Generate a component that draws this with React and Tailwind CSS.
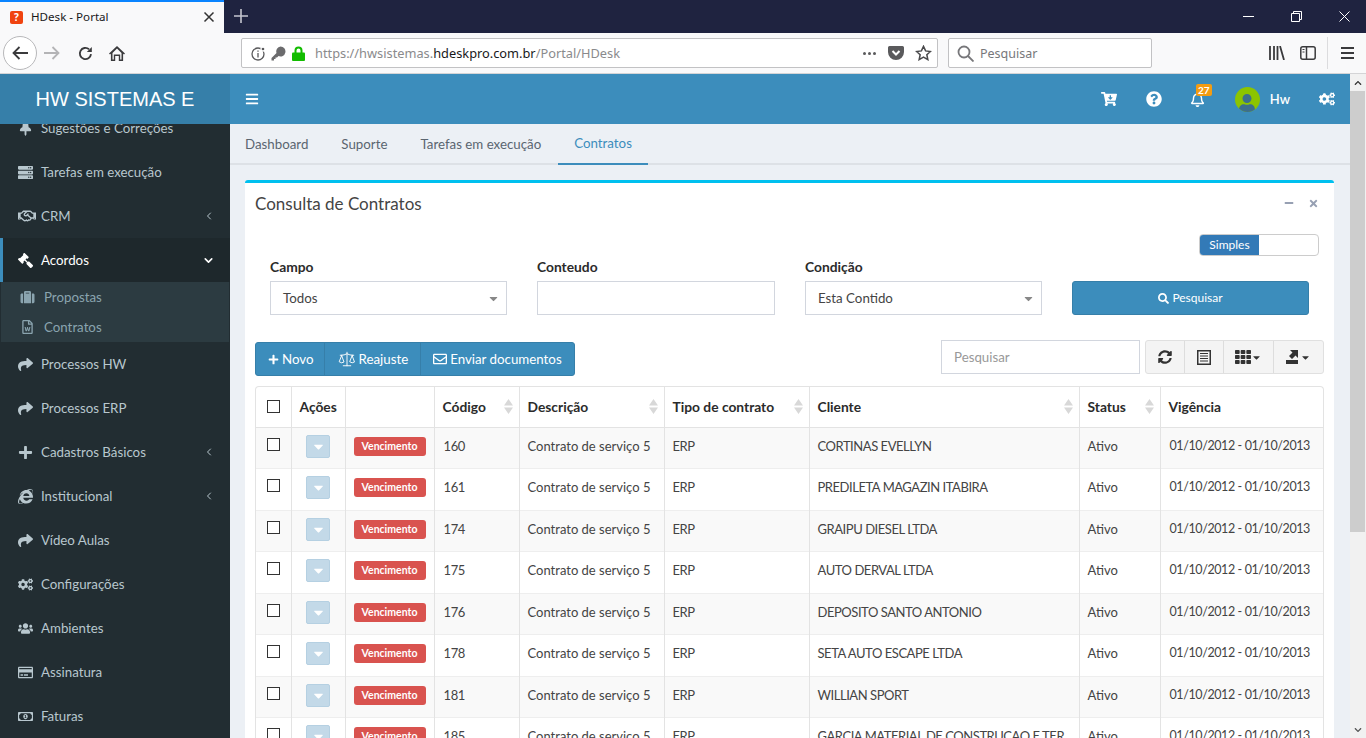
import React from 'react'
import {
  FaThumbtack, FaServer, FaRegHandshake, FaGavel, FaSuitcase, FaRegFileWord, FaShare, FaPlus,
  FaInternetExplorer, FaCogs, FaUsers, FaRegCreditCard, FaRegMoneyBillAlt, FaRegEnvelope,
  FaSyncAlt, FaTh, FaCartArrowDown, FaQuestionCircle, FaRegBell, FaUser, FaSearch,
  FaChevronLeft, FaChevronDown, FaTimes, FaMinus, FaCaretDown, FaBars,
} from 'react-icons/fa'
import { ChevronLeft, ChevronDown, Scale } from 'lucide-react'

const menu = [
  { icon: FaThumbtack, label: 'Sugestões e Correções' },
  { icon: FaServer, label: 'Tarefas em execução' },
  { icon: FaRegHandshake, label: 'CRM', arrow: true, big: true },
  { icon: FaGavel, label: 'Acordos', open: true },
  { icon: FaShare, label: 'Processos HW' },
  { icon: FaShare, label: 'Processos ERP' },
  { icon: FaPlus, label: 'Cadastros Básicos', arrow: true },
  { icon: FaInternetExplorer, label: 'Institucional', arrow: true },
  { icon: FaShare, label: 'Vídeo Aulas' },
  { icon: FaCogs, label: 'Configurações' },
  { icon: FaUsers, label: 'Ambientes' },
  { icon: FaRegCreditCard, label: 'Assinatura' },
  { icon: FaRegMoneyBillAlt, label: 'Faturas' },
]

const rows = [
  ['160', 'CORTINAS EVELLYN'],
  ['161', 'PREDILETA MAGAZIN ITABIRA'],
  ['174', 'GRAIPU DIESEL LTDA'],
  ['175', 'AUTO DERVAL LTDA'],
  ['176', 'DEPOSITO SANTO ANTONIO'],
  ['178', 'SETA AUTO ESCAPE LTDA'],
  ['181', 'WILLIAN SPORT'],
  ['185', 'GARCIA MATERIAL DE CONSTRUCAO E TER'],
]

function BrowserBar() {
  return (
    <div className="h-[74px] shrink-0 bg-[#f9f9fa] font-['Noto_Sans',sans-serif]">
      <div className="flex h-[33px] bg-[#1f2340] text-white">
        <div className="flex h-[33px] w-[224px] items-center border-t-2 border-[#0a84ff] bg-[#f9f9fa] pb-[1px] pl-[10px] pr-[9px] text-[11.6px] text-[#18181a]">
          <span className="flex h-[13px] w-[13px] items-center justify-center rounded-[2px] bg-[#f0430f] text-[10px] font-bold text-white">?</span>
          <span className="ml-[8px]">HDesk - Portal</span>
          <svg className="ml-auto" width="12" height="12" viewBox="0 0 12 12" stroke="#333" strokeWidth="1.5"><path d="M1.5 1.5l9 9M10.5 1.5l-9 9" /></svg>
        </div>
        <svg className="ml-[10px] mt-[9px]" width="14" height="14" viewBox="0 0 14 14" stroke="#c5c6cf" strokeWidth="1.6"><path d="M7 0v14M0 7h14" /></svg>
        <div className="ml-auto flex items-center">
          <svg className="mr-[37px]" width="11" height="11" viewBox="0 0 11 11" stroke="#fff"><path d="M0 5.5h11" /></svg>
          <svg className="mr-[37px]" width="11" height="11" viewBox="0 0 11 11" stroke="#fff" fill="none"><path d="M.5 2.5h8v8h-8zM2.500 2.500v-2h8v8h-2" /></svg>
          <svg className="mr-[16px]" width="11" height="11" viewBox="0 0 11 11" stroke="#fff"><path d="M.5.5l10 10M10.500.5l-10 10" /></svg>
        </div>
      </div>
      <div className="flex h-[41px] items-center border-b border-[#d4d4d6] pl-[3px]">
        <div className="flex h-[34px] w-[34px] items-center justify-center rounded-full border border-[#b8b8ba] bg-white">
          <svg width="16" height="14" viewBox="0 0 16 14" fill="none" stroke="#3a3a3c" strokeWidth="1.8"><path d="M16 7H2M7.5 1L1.5 7l6 6" /></svg>
        </div>
        <svg className="ml-[7px]" width="16" height="14" viewBox="0 0 16 14" fill="none" stroke="#b4b4b6" strokeWidth="1.8"><path d="M0 7h14M8.5 1l6 6-6 6" /></svg>
        <svg className="ml-[18px]" width="15" height="15" viewBox="0 0 15 15" fill="none" stroke="#3a3a3c" strokeWidth="1.9"><path d="M13 8.2A5.6 5.6 0 1 1 11 3.2" /><path d="M13.8 1v5h-5z" fill="#3a3a3c" stroke="none" /></svg>
        <svg className="ml-[16px]" width="16" height="15" viewBox="0 0 16 15" fill="#3a3a3c"><path d="M8 0l8 7.4-1 1.1-.9-.8V15H9.800V10H6.200v5H1.900V7.700l-.9.800-1-1.100z" /><path d="M3.500 7v6.500h1.300V8.500h6.400v5h1.300V7L8 2.500z" fill="#f9f9fa" /></svg>
        <div className="ml-[116px] flex h-[30px] w-[697px] items-center rounded-[2px] border border-[#c2c2c4] bg-white pl-[9px] pr-[5px] text-[12.8px]">
          <svg width="15" height="15" viewBox="0 0 15 15" fill="none" stroke="#5a5a5c" strokeWidth="1.300"><circle cx="7" cy="8" r="6" /><path d="M7 7v4.500M7 4.500v1.300" /><circle cx="12" cy="3" r="2" fill="#5a5a5c" stroke="#fff" /></svg>
          <svg className="ml-[5px]" width="15" height="15" viewBox="0 0 15 15" fill="#6b6b6d"><path d="M9.500 0.500a5 5 0 1 1-2 9.600L6 11.500H4.500V13H3v1.500H.5V12l5-5a5 5 0 0 1 4-6.500z" /></svg>
          <svg className="ml-[6px]" width="13" height="15" viewBox="0 0 13 15"><path d="M3.500 7V4.500a3 3 0 0 1 6 0V7" fill="none" stroke="#12bc00" strokeWidth="2" /><rect y="6.500" width="13" height="8.500" rx="1" fill="#12bc00" /></svg>
          <span className="ml-[10px] pt-[2px] text-[#8a8a8c]">https://hwsistemas.<span className="text-[#18181a]">hdeskpro.com.br</span>/Portal/HDesk</span>
          <span className="ml-auto flex gap-[2px]"><i className="h-[3px] w-[3px] rounded-full bg-[#5a5a5c]" /><i className="h-[3px] w-[3px] rounded-full bg-[#5a5a5c]" /><i className="h-[3px] w-[3px] rounded-full bg-[#5a5a5c]" /></span>
          <svg className="ml-[12px]" width="16" height="15" viewBox="0 0 16 15"><path d="M1.500 0h13A1.500 1.500 0 0 1 16 1.500V6A8 8 0 0 1 0 6V1.500A1.500 1.500 0 0 1 1.500 0z" fill="#5a5a5c" /><path d="M4.500 5L8 8.500 11.500 5" fill="none" stroke="#fff" strokeWidth="2" /></svg>
          <svg className="ml-[11px]" width="17" height="16" viewBox="0 0 24 23" fill="none" stroke="#4a4a4c" strokeWidth="2.200"><path d="M12 2l3 6.500 7 .8-5.200 4.700 1.400 7L12 17.500 5.800 21l1.400-7L2 9.300l7-.8z" /></svg>
        </div>
        <div className="ml-[10px] flex h-[30px] w-[204px] items-center rounded-[2px] border border-[#c2c2c4] bg-white pl-[8px] text-[12.5px] text-[#77777a]">
          <svg width="17" height="17" viewBox="0 0 17 17" fill="none" stroke="#77777a" strokeWidth="1.800"><circle cx="7" cy="7" r="5.500" /><path d="M11 11l5.500 5.500" /></svg>
          <span className="ml-[6px] pt-[2px]">Pesquisar</span>
        </div>
        <svg className="ml-[117px]" width="16" height="14" viewBox="0 0 16 14" stroke="#3a3a3c" strokeWidth="1.800"><path d="M1 0v14M5 0v14M8.500 0v14M11 0l4 14" /></svg>
        <svg className="ml-[15px]" width="16" height="14" viewBox="0 0 16 14" fill="none" stroke="#3a3a3c" strokeWidth="1.500"><rect x=".8" y=".8" width="14.400" height="12.400" rx="2" /><path d="M6.500 1v12" /><path d="M2.500 3.500h2M2.500 6h2" strokeWidth="1" /></svg>
        <i className="ml-[11px] h-[32px] w-px bg-[#dcdcde]" />
        <svg className="ml-[13px]" width="13" height="12" viewBox="0 0 13 12" stroke="#3a3a3c" strokeWidth="1.800"><path d="M0 1h13M0 6h13M0 11h13" /></svg>
      </div>
    </div>
  )
}

function SideItem({ item }) {
  const Icon = item.icon
  return (
    <div className={`flex h-[44px] shrink-0 items-center pr-[15px] text-[13.3px] ${item.open ? 'border-l-[3px] border-[#3c8dbc] bg-[#1e282c] pl-[15px] text-white' : 'pl-[18px] text-[#b8c7ce]'}`}>
      <span className="flex w-[23px] shrink-0 items-center">
        <Icon className={`${item.big ? 'text-[18px]' : 'text-[15px]'} ${item.open ? '-scale-x-100' : ''}`} />
      </span>
      <span className="pt-[2px]">{item.label}</span>
      {item.arrow && <ChevronLeft className="ml-auto" size={12} strokeWidth={2} />}
      {item.open && <ChevronDown className="ml-auto" size={13} strokeWidth={3} />}
    </div>
  )
}

function Sidebar() {
  return (
    <aside className="w-[230px] shrink-0 overflow-hidden bg-[#222d32]">
      <div className="-mt-[18px] flex flex-col">
        {menu.map((m) => (
          <React.Fragment key={m.label}>
            <SideItem item={m} />
            {m.open && (
              <div className="mx-px h-[60px] shrink-0 bg-[#2c3b41] text-[13.3px] text-[#8aa4af]">
                <div className="flex h-[30px] items-center pl-[19px]">
                  <FaSuitcase className="mr-[9px] w-[15px] text-[14px]" /><span className="pt-[2px]">Propostas</span>
                </div>
                <div className="flex h-[30px] items-center pl-[19px]">
                  <FaRegFileWord className="mr-[9px] w-[15px] text-[14px]" /><span className="pt-[2px]">Contratos</span>
                </div>
              </div>
            )}
          </React.Fragment>
        ))}
      </div>
    </aside>
  )
}

function Header() {
  return (
    <header className="flex h-[50px] shrink-0 text-white">
      <div className="flex w-[230px] items-center justify-center bg-[#367fa9] font-['Liberation_Sans',sans-serif] text-[20px]">HW SISTEMAS E</div>
      <div className="flex flex-1 items-center bg-[#3c8dbc]">
        <FaBars className="ml-[15px] text-[14px]" />
        <div className="ml-auto flex items-center">
          <FaCartArrowDown className="mr-[29px] text-[16px]" />
          <FaQuestionCircle className="mr-[28px] text-[16px]" />
          <span className="relative mr-[30px]">
            <FaRegBell className="text-[15px]" />
            <span className="absolute -top-[8px] left-[6px] h-[12px] w-[16px] rounded-[2px] bg-[#f39c12] text-center text-[10px] font-bold leading-[12px]">27</span>
          </span>
          <span className="flex h-[25px] w-[25px] items-end justify-center overflow-hidden rounded-full bg-[#8cc400]"><FaUser className="text-[18px] text-[#3c6e8c]" /></span>
          <span className="ml-[10px] mr-[29px] mt-[2px] text-[13px] font-semibold">Hw</span>
          <FaCogs className="mr-[15px] text-[16px]" />
        </div>
      </div>
    </header>
  )
}

function Tabs() {
  const tabs = ['Dashboard', 'Suporte', 'Tarefas em execução', 'Contratos']
  return (
    <div className="flex h-[41px] shrink-0 border-b-2 border-[#dde1e6] text-[13.3px] text-[#5a6570]">
      {tabs.map((t) => (
        <div key={t} className={`-mb-[2px] flex h-[41px] items-center px-[16.5px] first:-ml-[1.5px] ${t === 'Contratos' ? 'border-b-2 border-[#3c8dbc] text-[#3c8dbc]' : ''}`}>{t}</div>
      ))}
    </div>
  )
}

function FormField({ label, value, select, w }) {
  return (
    <div className={w}>
      <div className="mb-[5px] text-[13.8px] font-bold leading-[18px] text-[#2b2b2b]">{label}</div>
      <div className="flex h-[34px] items-center border border-[#d2d6de] pl-[12px] pr-[6px] text-[13.3px] text-[#444]">
        <span className="pt-[2px]">{value}</span>
        {select && <FaCaretDown className="ml-auto text-[13px] text-[#888]" />}
      </div>
    </div>
  )
}

function SortIcon() {
  return (
    <svg className="ml-auto -mr-[2px] -mt-[2px] shrink-0" width="9" height="15" viewBox="0 0 9 15" fill="#d8d8d8"><path d="M4.500 0L9 6.500H0zM0 8.500h9L4.500 15z" /></svg>
  )
}

function Th({ w, label, sort }) {
  return (
    <th className={`${w} h-[40px] border-r border-[#e3e3e3] px-[8px] text-left align-middle text-[13.8px] font-bold text-[#2b2b2b] last:border-r-0`}>
      <div className="flex items-center whitespace-nowrap pt-[2px]">{label}{sort && <SortIcon />}</div>
    </th>
  )
}

function ContractsTable() {
  return (
    <div className="h-[352px] overflow-hidden rounded-t-[4px] border border-b-0 border-[#e3e3e3]">
      <table className="w-full table-fixed border-collapse text-[13px] text-[#444]">
        <thead>
          <tr className="border-b border-[#e3e3e3]">
            <th className="h-[40px] w-[35px] border-r border-[#e3e3e3] align-middle">
              <div className="ml-[11px] h-[13px] w-[13px] border border-[#333] bg-white" />
            </th>
            <Th w="w-[54px]" label="Ações" />
            <Th w="w-[89px]" />
            <Th w="w-[85px]" label="Código" sort />
            <Th w="w-[145px]" label="Descrição" sort />
            <Th w="w-[145px]" label="Tipo de contrato" sort />
            <Th w="w-[270px]" label="Cliente" sort />
            <Th w="w-[81px]" label="Status" sort />
            <Th w="w-[163px]" label="Vigência" />
          </tr>
        </thead>
        <tbody>
          {rows.map(([code, client], i) => (
            <tr key={code} className={`h-[41.5px] border-b border-[#eeeeee] ${i % 2 === 0 ? 'bg-[#f9f9f9]' : 'bg-white'}`}>
              <td className="border-r border-[#e3e3e3] align-top">
                <div className="ml-[11px] mt-[10px] h-[13px] w-[13px] border border-[#333] bg-white" />
              </td>
              <td className="border-r border-[#e3e3e3] pb-[3px]">
                <div className="mx-auto flex h-[23px] w-[24px] items-center justify-center rounded-[2px] border border-[#b5d0e2] bg-[#c3d9e8]">
                  <FaCaretDown className="text-[15px] text-white" />
                </div>
              </td>
              <td className="border-r border-[#e3e3e3] pb-[3px] pl-[8px]">
                <span className="block h-[19px] w-[72px] rounded-[3px] bg-[#d9534f] text-center text-[10.500px] font-bold leading-[19px] text-white">Vencimento</span>
              </td>
              <td className="border-r border-[#e3e3e3] pb-[3px] pl-[9px] pr-[8px] tracking-[-0.4px]">{code}</td>
              <td className="whitespace-nowrap border-r border-[#e3e3e3] px-[8px] pb-[3px]">Contrato de serviço 5</td>
              <td className="border-r border-[#e3e3e3] px-[8px] pb-[3px] tracking-[-0.4px]">ERP</td>
              <td className="truncate border-r border-[#e3e3e3] px-[8px] pb-[3px] tracking-[-0.45px]">{client}</td>
              <td className="border-r border-[#e3e3e3] px-[8px] pb-[3px]">Ativo</td>
              <td className="whitespace-nowrap pb-[3px] pl-[9px] pr-[8px] text-[12.5px] tracking-[-0.4px]">01/10/2012 - 01/10/2013</td>
            </tr>
          ))}
        </tbody>
      </table>
    </div>
  )
}

function ListIcon() {
  return (
    <svg width="14" height="15" viewBox="0 0 14 15" fill="none" stroke="#333"><rect x=".75" y=".75" width="12.500" height="13.500" strokeWidth="1.500" /><path d="M3 3.500h8M3 6h8M3 8.500h8M3 11h8" /></svg>
  )
}

function ExportIcon() {
  return (
    <svg width="12" height="14" viewBox="0 0 12 14" fill="#333"><path d="M0 10h12v4H0zM4 0h8v8L9.500 5.500 6 9 3 6l3.500-3.500z" /></svg>
  )
}

function Card() {
  return (
    <section className="ml-[15px] mr-[16px] mt-[15px] rounded-t-[3px] border-t-[3px] border-[#00c0ef] bg-white px-[10px]">
      <div className="flex h-[40px] items-center text-[#444]">
        <h3 className="pt-[2px] text-[17px]">Consulta de Contratos</h3>
        <FaMinus className="ml-auto text-[10px] text-[#97a0b3]" />
        <FaTimes className="ml-[14px] mr-[5px] text-[11px] text-[#97a0b3]" />
      </div>
      <div className="mt-[11px] flex justify-end pr-[5px]">
        <div className="flex h-[22px] w-[120px] overflow-hidden rounded-[4px] border border-[#ccc] text-[12px] text-white">
          <span className="flex w-[59px] items-center justify-center bg-[#337ab7]">Simples</span>
        </div>
      </div>
      <div className="mt-[2px] flex items-end px-[15px]">
        <FormField label="Campo" value="Todos" select w="w-[237px]" />
        <FormField label="Conteudo" w="ml-[30px] w-[238px]" />
        <FormField label="Condição" value="Esta Contido" select w="ml-[30px] w-[237px]" />
        <button className="ml-[30px] flex h-[34px] w-[237px] items-center justify-center rounded-[3px] border border-[#367fa9] bg-[#3c8dbc] text-[12px] text-white">
          <FaSearch className="mr-[3px] text-[11px]" />Pesquisar
        </button>
      </div>
      <div className="mt-[27px] flex h-[34px] items-center">
        <div className="flex h-[34px] overflow-hidden rounded-[3px] border border-[#367fa9] bg-[#3c8dbc] text-[13.3px] text-white">
          <span className="flex items-center border-r border-[#367fa9] pl-[12px] pr-[10px] pt-[2px]"><FaPlus className="mr-[3px] -mt-[2px] text-[11px]" />Novo</span>
          <span className="flex items-center border-r border-[#367fa9] pl-[13px] pr-[12px] pt-[2px]"><Scale className="mr-[3px] -mt-[2px]" size={18} strokeWidth={1.25} />Reajuste</span>
          <span className="flex items-center pl-[12px] pr-[12px] pt-[2px]"><FaRegEnvelope className="mr-[3px] -mt-[2px] text-[14px]" />Enviar documentos</span>
        </div>
        <div className="mb-[4px] ml-auto flex h-[34px] w-[199px] items-center border border-[#d2d6de] pl-[12px] pt-[2px] text-[13.3px] text-[#999]">Pesquisar</div>
        <div className="mb-[4px] ml-[5px] flex h-[34px] w-[179px] rounded-[3px] border border-[#e0e0e0] bg-[#f4f4f4] text-[#333]">
          <span className="flex w-[39px] items-center justify-center border-r border-[#dddddd]"><FaSyncAlt className="text-[14px]" /></span>
          <span className="flex w-[39px] items-center justify-center border-r border-[#dddddd]"><ListIcon /></span>
          <span className="flex w-[50px] items-center justify-center border-r border-[#dddddd]"><FaTh className="text-[16px]" /><FaCaretDown className="text-[11px]" /></span>
          <span className="flex flex-1 items-center justify-center"><ExportIcon /><FaCaretDown className="ml-[2px] text-[11px]" /></span>
        </div>
      </div>
      <div className="mt-[10px]"><ContractsTable /></div>
    </section>
  )
}

export default function App() {
  return (
    <div className="flex h-[738px] w-[1366px] flex-col overflow-hidden font-['Lato',sans-serif]">
      <BrowserBar />
      <div className="flex min-h-0 flex-1">
        <div className="flex min-w-0 flex-1 flex-col">
          <Header />
          <div className="flex min-h-0 flex-1">
            <Sidebar />
            <main className="min-w-0 flex-1 overflow-hidden bg-[#ecf0f5]">
              <Tabs />
              <Card />
            </main>
          </div>
        </div>
        <div className="flex w-[16px] shrink-0 flex-col bg-[#f1f1f1]">
          <div className="flex h-[17px] items-center justify-center"><FaChevronLeft className="rotate-90 text-[8px] text-[#333]" /></div>
          <div className="mr-px h-[441px] bg-[#cdcdcd]" />
          <div className="mt-auto flex h-[17px] items-center justify-center"><FaChevronDown className="text-[8px] text-[#555]" /></div>
        </div>
      </div>
    </div>
  )
}
